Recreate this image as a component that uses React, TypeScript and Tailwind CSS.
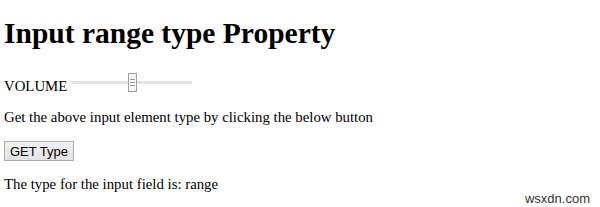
import React from "react";

export default function App() {
  return (
    <div
      className="relative w-[600px] h-[207px] bg-white text-black overflow-hidden pl-[4px]"
      style={{ fontFamily: '"Liberation Serif", "Times New Roman", serif' }}
    >
      <h1 className="mt-[16px] text-[29.5px] leading-[35px] font-bold">Input range type Property</h1>
      <div className="mt-[22px] flex h-[20px] items-start">
        <span className="mt-[5px] text-[14.8px] leading-[17px]">VOLUME</span>
        <div className="relative ml-[5px] h-[20px] w-[120px]">
          <div className="mt-[8px] h-[3px] w-full bg-[#e3e3e3]" />
          <div className="absolute left-[56px] top-0 flex h-[19px] w-[9px] flex-col items-center justify-center gap-[2px] border border-[#a0a0a0] bg-[#f4f4f4]">
            <div className="h-px w-[5px] bg-[#9a9a9a]" />
            <div className="h-px w-[5px] bg-[#9a9a9a]" />
            <div className="h-px w-[5px] bg-[#9a9a9a]" />
          </div>
        </div>
      </div>
      <p className="mt-[16px] text-[14.8px] leading-[17px]">Get the above input element type by clicking the below button</p>
      <button
        className="mt-[15px] flex h-[20px] w-[70px] items-center justify-center border border-[#adadad] bg-gradient-to-b from-[#f2f2f2] to-[#e3e3e3] text-[13px] leading-[15px]"
        style={{ fontFamily: '"Liberation Sans", Arial, sans-serif' }}
      >
        GET Type
      </button>
      <p className="mt-[15px] text-[14.8px] leading-[17px]">The type for the input field is: range</p>
      <div
        className="absolute right-[10px] bottom-[1px] text-[13px] leading-[15px] text-[#333]"
        style={{ fontFamily: '"Liberation Sans", Arial, sans-serif' }}
      >
        wsxdn.com
      </div>
    </div>
  );
}
